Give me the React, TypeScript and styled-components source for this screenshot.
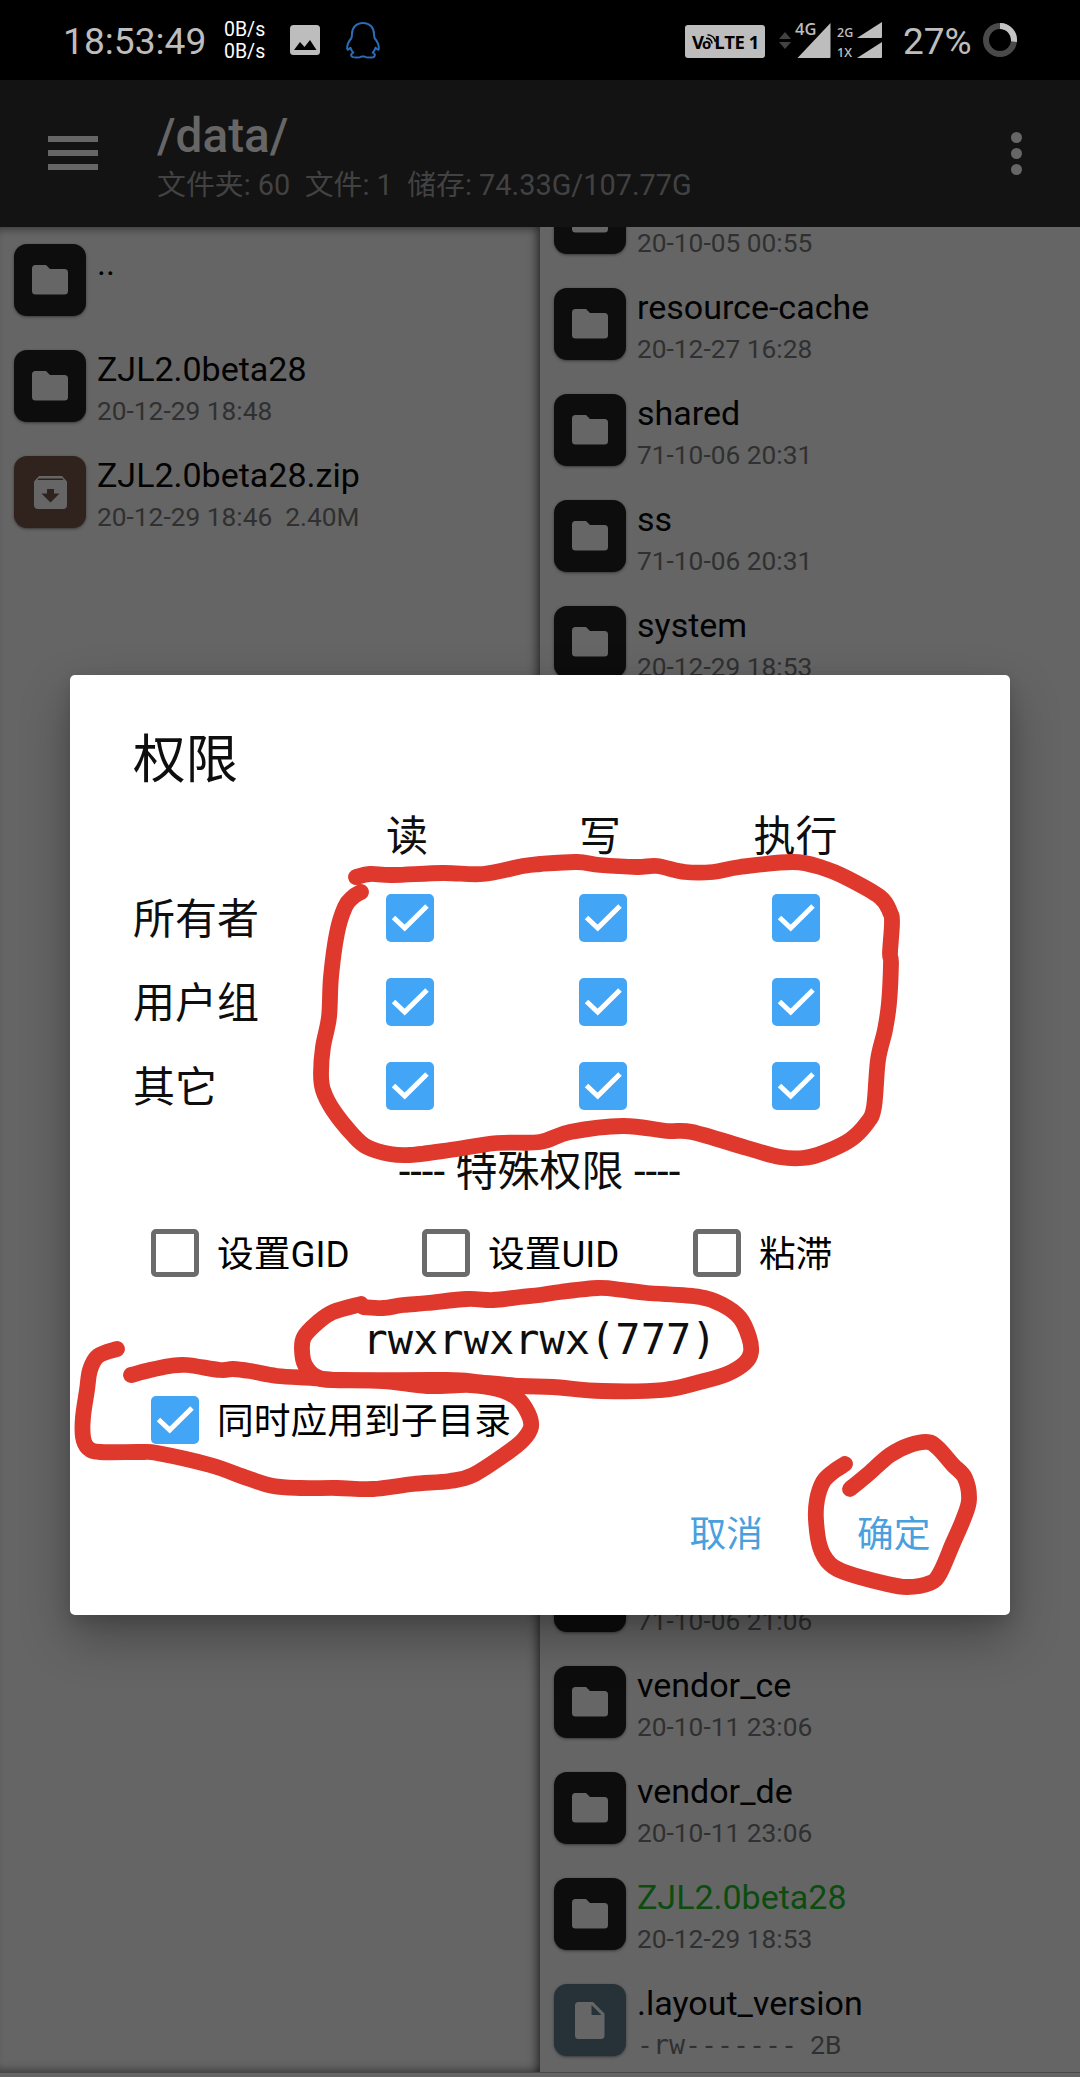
import React from "react";
import styled, { createGlobalStyle } from "styled-components";

const SANS = `Roboto, "Noto Sans CJK SC", sans-serif`;

const GlobalStyle = createGlobalStyle`
  * { box-sizing: border-box; }
  body { margin: 0; background: #000; }
`;

const Screen = styled.div`
  position: relative;
  display: flex;
  flex-direction: column;
  width: 1080px;
  height: 2077px;
  overflow: hidden;
  background: #656565;
  font-family: ${SANS};
`;

/* ---------- status bar ---------- */

const StatusBar = styled.header`
  display: flex;
  align-items: center;
  flex: none;
  height: 80px;
  padding: 0 63px 0 63px;
  background: #000;
  color: #bdbdbd;
`;

const Clock = styled.span`
  width: 161px;
  font-size: 37.2px;
  line-height: 44px;
  padding-top: 2px;
`;

const NetSpeed = styled.div`
  width: 66px;
  padding-top: 2px;
  font-size: 19.5px;
  line-height: 22.5px;
  color: #fff;
  white-space: nowrap;
`;

const StatusIcons = styled.div`
  display: flex;
  align-items: center;
  gap: 26px;
`;

const StatusRight = styled.div`
  display: flex;
  align-items: center;
  margin-left: auto;
`;

const VolteBadge = styled.div`
  position: relative;
  display: flex;
  align-items: center;
  width: 80px;
  height: 33px;
  margin-top: 2px;
  padding-left: 7px;
  border-radius: 3px;
  background: #bdbdbd;
  color: #000;
  font: 700 18.5px/33px "Open Sans", sans-serif;
`;

const VolteSmallO = styled.span`
  margin: 5px 0 0 -2px;
  font-size: 15px;
`;

const VolteTail = styled.span`
  margin-left: 3px;
  letter-spacing: -0.5px;
  white-space: pre;
`;

const VolteWaves = styled.svg`
  position: absolute;
  left: 20px;
  top: 8px;
`;

const Arrows = styled.svg`
  margin: 0 4px 0 14px;
`;

const SignalBox = styled.div`
  position: relative;
  width: 36px;
  height: 36px;
`;

const SignalLabel = styled.span`
  position: absolute;
  left: 0;
  top: -1px;
  font: 600 16.5px/16px "Open Sans", sans-serif;
`;

const DualSignal = styled.div`
  display: flex;
  flex-direction: column;
  gap: 4px;
  width: 45px;
  margin-left: 6px;
`;

const DualRow = styled.div`
  display: flex;
  align-items: flex-end;
  justify-content: space-between;
  height: 16px;
  font: 600 12.5px/11px "Open Sans", sans-serif;
`;

const Battery = styled.span`
  width: 80px;
  margin-left: 21px;
  padding-top: 3px;
  font-size: 37px;
  line-height: 44px;
`;

/* ---------- app bar ---------- */

const AppBar = styled.div`
  display: flex;
  align-items: center;
  flex: none;
  height: 147px;
  padding: 0 58px 1px 48px;
  background: #131313;
`;

const MenuIcon = styled.div`
  display: flex;
  flex-direction: column;
  justify-content: space-between;
  width: 50px;
  height: 34px;
  margin-right: 59px;

  i { height: 6px; background: #666; }
`;

const Heading = styled.div`
  flex: 1;
  padding-top: 7px;
`;

const Path = styled.div`
  font-size: 47.7px;
  font-weight: 500;
  line-height: 57px;
  color: #666;
`;

const Summary = styled.div`
  font-size: 28.9px;
  line-height: 41px;
  color: #424242;
  white-space: pre;
`;

const Dots = styled.div`
  display: flex;
  flex-direction: column;
  gap: 5px;

  i { width: 11px; height: 11px; border-radius: 50%; background: #666; }
`;

/* ---------- file panes ---------- */

const Panes = styled.main`
  display: grid;
  grid-template-columns: 540px 540px;
  flex: none;
  height: 1845px;
`;

const LeftPane = styled.section`
  padding-top: 17px;
  box-shadow: inset -9px 7px 10px -6px rgba(0, 0, 0, 0.55), inset 0 -7px 8px -5px rgba(0, 0, 0, 0.4);
`;

const RightPane = styled.section`
  display: flex;
  flex-direction: column;
  justify-content: space-between;
  overflow: hidden;
`;

const RowGroup = styled.div<{ $lift?: boolean }>`
  margin-top: ${(p) => (p.$lift ? "-45px" : "0")};
  margin-bottom: ${(p) => (p.$lift ? "0" : "-18px")};
`;

const FileRow = styled.div`
  display: flex;
  gap: 11px;
  height: 106px;
  padding-left: 14px;
`;

const Tile = styled.div<{ $color: string }>`
  display: flex;
  align-items: center;
  justify-content: center;
  flex: none;
  width: 72px;
  height: 72px;
  border-radius: 13px;
  background: ${(p) => p.$color};
  box-shadow: 0 1px 3px rgba(0, 0, 0, 0.45);
`;

const FileText = styled.div`
  display: flex;
  flex-direction: column;
  justify-content: flex-end;
  height: 76px;
  padding-top: 1px;
  white-space: pre;
`;

const FileName = styled.div<{ $green?: boolean }>`
  flex: 1;
  font-size: 34px;
  line-height: 37px;
  color: ${(p) => (p.$green ? "#0c4d0f" : "#020202")};
`;

const FileMeta = styled.div`
  font-size: 26.3px;
  line-height: 30px;
  color: #303030;
`;

const Mode = styled.span`
  font-family: "DejaVu Sans Mono", monospace;
  font-size: 26.6px;
`;

const BottomEdge = styled.div`
  flex: none;
  height: 5px;
  border-top: 1px solid #4a4a4a;
  background: #656565;
`;

/* ---------- dialog ---------- */

const DialogLayer = styled.div`
  position: absolute;
  inset: 0;
  padding: 675px 70px 0;
`;

const Dialog = styled.div`
  display: flex;
  flex-direction: column;
  height: 940px;
  padding: 41px 64px 0 63px;
  border-radius: 5px;
  background: #fff;
  color: #0e0e0e;
  font-size: 42px;
  box-shadow: 0 22px 50px rgba(0, 0, 0, 0.3), 0 6px 16px rgba(0, 0, 0, 0.12);
`;

const Title = styled.h1`
  height: 78px;
  margin: 0;
  font-size: 52.5px;
  font-weight: 400;
  line-height: 88px;
`;

const Matrix = styled.div`
  display: grid;
  grid-template-columns: 180px repeat(3, 193px);
  grid-template-rows: 82px repeat(3, 84px);
  align-items: center;
`;

const ColumnHead = styled.div<{ $shift?: number }>`
  padding: 0 ${(p) => p.$shift ?? 0}px 5px 0;
  text-align: center;
`;

const Subject = styled.div`
  padding-bottom: 5px;
  white-space: nowrap;
`;

const Cell = styled.div`
  display: flex;
  justify-content: center;
`;

const Box = styled.span<{ $on?: boolean }>`
  display: flex;
  flex: none;
  width: 48px;
  height: 48px;
  border: ${(p) => (p.$on ? "none" : "5px solid #6b6b6b")};
  border-radius: 5px;
  background: ${(p) => (p.$on ? "#42a5f5" : "transparent")};
`;

const Divider = styled.div`
  height: 84px;
  line-height: 87px;
  text-align: center;
`;

const Options = styled.div`
  display: grid;
  grid-template-columns: repeat(3, 271px);
  align-items: center;
  height: 82px;
  padding-left: 18px;
`;

const Option = styled.label`
  display: flex;
  align-items: center;
  gap: 18px;
  color: #000;
  font-size: 36.75px;
  white-space: nowrap;
`;

const OptionText = styled.span`
  padding-bottom: 4px;
`;

const ModeLine = styled.div`
  height: 84px;
  font-family: "DejaVu Sans Mono", monospace;
  font-size: 42px;
  line-height: 91px;
  text-align: center;
`;

const ApplyRow = styled.div`
  display: flex;
  align-items: center;
  height: 84px;
  padding-left: 18px;
`;

const Actions = styled.div`
  display: flex;
  align-items: center;
  justify-content: flex-end;
  gap: 94px;
  height: 138px;
  padding-right: 15.5px;
`;

const TextButton = styled.button`
  padding: 0;
  border: 0;
  background: none;
  color: #4a9fde;
  font: 400 36.75px ${SANS};
`;

const Ink = styled.svg`
  position: absolute;
  inset: 0;
`;

/* ---------- icons ---------- */

const FolderGlyph = () => (
  <svg width="36" height="30" viewBox="0 0 36 30">
    <path fill="#666" d="M3.500 0H14l4 4h14.500a3.500 3.500 0 0 1 3.500 3.500V26a3.500 3.500 0 0 1-3.500 3.500h-29A3.500 3.500 0 0 1 0 26V3.500A3.500 3.500 0 0 1 3.500 0z" />
  </svg>
);

const ArchiveGlyph = () => (
  <svg width="33" height="33" viewBox="0 0 33 33">
    <path fill="#666" fillRule="evenodd" d="M5 0h23l5 5.500V29a4 4 0 0 1-4 4H4a4 4 0 0 1-4-4V5.500zM4.500 2.600L3.500 4h26l-1-1.400zM13 13v4.500H7.500l9 9 9-9H20V13z" />
  </svg>
);

const FileGlyph = () => (
  <svg width="30" height="37" viewBox="0 0 30 37">
    <path fill="#666" fillRule="evenodd" d="M3.500 0H18l11.500 11.500V33.500a3.500 3.500 0 0 1-3.500 3.500H3.500A3.500 3.500 0 0 1 0 33.500v-30A3.500 3.500 0 0 1 3.500 0zM16.500 3v10h10z" />
  </svg>
);

const Check = () => (
  <svg width="48" height="48" viewBox="0 0 48 48">
    <path d="M7.500 23.500L18.700 34 41 12" fill="none" stroke="#fff" strokeWidth="5" />
  </svg>
);

const Checkbox = ({ on }: { on?: boolean }) => <Box $on={on}>{on && <Check />}</Box>;

const ImageGlyph = () => (
  <svg width="30" height="30" viewBox="0 0 30 30">
    <rect width="30" height="30" rx="3.500" fill="#bdbdbd" />
    <path d="M4 25l6-8 4.500 5 5.500-7 6.500 10z" fill="#000" />
  </svg>
);

const Penguin = () => (
  <svg width="34" height="37" viewBox="0 0 34 37">
    <path
      fill="none"
      stroke="#2a6cb8"
      strokeWidth="2"
      strokeLinejoin="round"
      d="M17 1C10 1 6 6 6 12c0 2-.5 3-.5 4C3 19 1 23 1.200 26.500c.3 1.800 1.500 1.500 3.300-.8.5 2 1.500 3.600 2.800 4.900-2 .8-2.600 2.400-1.700 3.700 1.200 1.700 8 1.700 10 .2h2.800c2 1.500 8.800 1.500 10-.2.900-1.300.3-2.900-1.700-3.700 1.300-1.300 2.300-2.900 2.800-4.900 1.800 2.300 3 2.600 3.300.8.200-3.500-1.800-7.500-4.300-10.500 0-1-.5-2-.5-4C28 6 24 1 17 1z"
    />
  </svg>
);

/* ---------- data ---------- */

type Kind = "folder" | "archive" | "file";
type Entry = { kind?: Kind; name?: string; meta?: string; mode?: string; green?: boolean };

const tileColor: Record<Kind, string> = { folder: "#0d0d0d", archive: "#30221d", file: "#263238" };
const glyph: Record<Kind, React.ReactNode> = {
  folder: <FolderGlyph />,
  archive: <ArchiveGlyph />,
  file: <FileGlyph />,
};

const leftFiles: Entry[] = [
  { name: ".." },
  { name: "ZJL2.0beta28", meta: "20-12-29 18:48" },
  { kind: "archive", name: "ZJL2.0beta28.zip", meta: "20-12-29 18:46  2.40M" },
];

const rightTop: Entry[] = [
  { meta: "20-10-05 00:55" },
  { name: "resource-cache", meta: "20-12-27 16:28" },
  { name: "shared", meta: "71-10-06 20:31" },
  { name: "ss", meta: "71-10-06 20:31" },
  { name: "system", meta: "20-12-29 18:53" },
];

const rightBottom: Entry[] = [
  { meta: "71-10-06 21:06" },
  { name: "vendor_ce", meta: "20-10-11 23:06" },
  { name: "vendor_de", meta: "20-10-11 23:06" },
  { name: "ZJL2.0beta28", meta: "20-12-29 18:53", green: true },
  { kind: "file", name: ".layout_version", mode: "-rw-------", meta: "  2B" },
];

const subjects = ["所有者", "用户组", "其它"];

type Point = [number, number];

const strokes: Point[][] = [
  [[356,877],[370,874],[393,875],[443,873],[483,874],[523,866],[540,864],[577,862],[600,865],[637,867],[657,866],[685,872],[713,872],[740,867],[793,862],[823,868],[847,878],[880,897],[890,912],[892,923],[890,953],[891,963],[889,1003],[885,1030],[878,1060],[874,1107],[867,1123],[850,1140],[823,1153],[803,1158],[780,1157],[747,1148],[692,1132],[667,1131],[623,1126],[570,1132],[540,1142],[497,1143],[450,1150],[410,1155],[390,1154],[367,1147],[353,1135],[333,1110],[323,1090],[321,1073],[323,1047],[329,1017],[331,977],[337,933],[345,907],[353,897],[361,892]],
  [[363,1307],[383,1308],[403,1305],[427,1303],[467,1299],[493,1300],[520,1297],[540,1295],[560,1292],[598,1288],[623,1290],[647,1293],[700,1297],[723,1305],[740,1318],[749,1337],[751,1352],[745,1363],[727,1374],[700,1382],[663,1390],[602,1391],[553,1387],[520,1386],[477,1382],[447,1380],[340,1380],[317,1377],[305,1365],[302,1350],[304,1337],[317,1323],[333,1312],[361,1304]],
  [[131,1375],[150,1370],[170,1366],[187,1365],[220,1370],[233,1369],[250,1371],[277,1376],[313,1378],[333,1380],[383,1381],[427,1386],[470,1385],[497,1389],[517,1398],[528,1413],[531,1427],[523,1440],[507,1453],[473,1475],[450,1481],[413,1484],[373,1489],[337,1488],[300,1488],[273,1486],[247,1478],[210,1465],[157,1453],[140,1452],[100,1452],[88,1448],[83,1437],[83,1417],[87,1390],[90,1370],[98,1356],[117,1349]],
  [[850,1489],[867,1475],[890,1455],[910,1445],[928,1442],[938,1448],[953,1465],[965,1478],[969,1500],[963,1520],[953,1543],[940,1573],[930,1583],[907,1587],[883,1583],[847,1573],[830,1564],[820,1547],[816,1520],[817,1500],[823,1482],[833,1472],[845,1464]],
];

/* Rounds a hand-drawn polyline with Catmull-Rom segments. */
const smooth = (pts: Point[]) => {
  let d = `M${pts[0].join(" ")}`;
  for (let i = 0; i < pts.length - 1; i++) {
    const a = pts[Math.max(i - 1, 0)];
    const b = pts[i];
    const c = pts[i + 1];
    const e = pts[Math.min(i + 2, pts.length - 1)];
    d += `C${b[0] + (c[0] - a[0]) / 6} ${b[1] + (c[1] - a[1]) / 6} ${c[0] - (e[0] - b[0]) / 6} ${c[1] - (e[1] - b[1]) / 6} ${c[0]} ${c[1]}`;
  }
  return d;
};

const FileItem = ({ kind = "folder", name, meta, mode, green }: Entry) => (
  <FileRow>
    <Tile $color={tileColor[kind]}>{glyph[kind]}</Tile>
    <FileText>
      <FileName $green={green}>{name}</FileName>
      {meta && (
        <FileMeta>
          {mode && <Mode>{mode}</Mode>}
          {meta}
        </FileMeta>
      )}
    </FileText>
  </FileRow>
);

export default function App() {
  return (
    <Screen>
      <GlobalStyle />
      <StatusBar>
        <Clock>18:53:49</Clock>
        <NetSpeed>
          <div>0B/s</div>
          <div>0B/s</div>
        </NetSpeed>
        <StatusIcons>
          <ImageGlyph />
          <Penguin />
        </StatusIcons>
        <StatusRight>
          <VolteBadge>
            V<VolteSmallO>o</VolteSmallO>
            <VolteTail>LTE 1</VolteTail>
            <VolteWaves width="12" height="12" viewBox="0 0 12 12" fill="none" stroke="#000" strokeWidth="1.600">
              <path d="M1 5.500a5 5 0 0 1 6 5M2.500 1.800a8.500 8.500 0 0 1 8 7" />
            </VolteWaves>
          </VolteBadge>
          <Arrows width="12" height="17" viewBox="0 0 12 17" fill="#424242">
            <path d="M6 0l6 7H0zM6 17l6-7H0z" />
          </Arrows>
          <SignalBox>
            <svg width="36" height="36" viewBox="0 0 36 36">
              <path d="M35.500 1v34a1 1 0 0 1-1 1H2.500z" fill="#bdbdbd" />
            </svg>
            <SignalLabel>4G</SignalLabel>
          </SignalBox>
          <DualSignal>
            {["2G", "1X"].map((label) => (
              <DualRow key={label}>
                {label}
                <svg width="25" height="16" viewBox="0 0 25 16">
                  <path d="M25 0v15a1 1 0 0 1-1 1H0z" fill="#bdbdbd" />
                </svg>
              </DualRow>
            ))}
          </DualSignal>
          <Battery>27%</Battery>
          <svg width="34" height="34" viewBox="0 0 34 34" fill="none" strokeWidth="6">
            <circle cx="17" cy="17" r="14" stroke="#494949" />
            <path d="M17 3a14 14 0 0 1 13.900 15.700" stroke="#c4c4c4" />
          </svg>
        </StatusRight>
      </StatusBar>

      <AppBar>
        <MenuIcon><i /><i /><i /></MenuIcon>
        <Heading>
          <Path>/data/</Path>
          <Summary>{"文件夹: 60  文件: 1  储存: 74.33G/107.77G"}</Summary>
        </Heading>
        <Dots><i /><i /><i /></Dots>
      </AppBar>

      <Panes>
        <LeftPane>
          {leftFiles.map((f, i) => <FileItem key={i} {...f} />)}
        </LeftPane>
        <RightPane>
          <RowGroup $lift>
            {rightTop.map((f, i) => <FileItem key={i} {...f} />)}
          </RowGroup>
          <RowGroup>
            {rightBottom.map((f, i) => <FileItem key={i} {...f} />)}
          </RowGroup>
        </RightPane>
      </Panes>
      <BottomEdge />

      <DialogLayer>
        <Dialog>
          <Title>权限</Title>
          <Matrix>
            <span />
            <ColumnHead $shift={5}>读</ColumnHead>
            <ColumnHead $shift={5}>写</ColumnHead>
            <ColumnHead>执行</ColumnHead>
            {subjects.map((s) => (
              <React.Fragment key={s}>
                <Subject>{s}</Subject>
                <Cell><Checkbox on /></Cell>
                <Cell><Checkbox on /></Cell>
                <Cell><Checkbox on /></Cell>
              </React.Fragment>
            ))}
          </Matrix>
          <Divider>---- 特殊权限 ----</Divider>
          <Options>
            {["设置GID", "设置UID", "粘滞"].map((o) => (
              <Option key={o}><Checkbox /><OptionText>{o}</OptionText></Option>
            ))}
          </Options>
          <ModeLine>rwxrwxrwx(777)</ModeLine>
          <ApplyRow>
            <Option><Checkbox on /><OptionText>同时应用到子目录</OptionText></Option>
          </ApplyRow>
          <Actions>
            <TextButton>取消</TextButton>
            <TextButton>确定</TextButton>
          </Actions>
        </Dialog>
      </DialogLayer>

      <Ink width="1080" height="2077" viewBox="0 0 1080 2077" fill="none" stroke="#df382c" strokeWidth="15.800" strokeLinecap="round" strokeLinejoin="round">
        {strokes.map((s, i) => <path key={i} d={smooth(s)} />)}
      </Ink>
    </Screen>
  );
}
